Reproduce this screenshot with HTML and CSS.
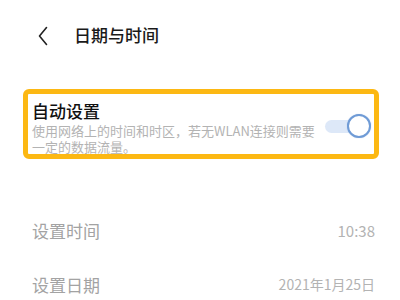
FILE: index.html
```html
<!DOCTYPE html>
<html lang="zh-CN">
<head>
<meta charset="utf-8">
<link rel="stylesheet" href="styles.css">
</head>
<body>
<div class="page">
  <header class="topbar">
    <svg class="back" width="10" height="20" viewBox="0 0 10 20"><path d="M8.5 1.5 L1.5 10 L8.5 18.5" fill="none" stroke="#222" stroke-width="1.6" stroke-linecap="round" stroke-linejoin="round"/></svg>
    <h1 class="title">日期与时间</h1>
  </header>
  <section class="auto">
    <div class="auto-text">
      <div class="auto-label">自动设置</div>
      <div class="auto-desc">使用网络上的时间和时区，若无WLAN连接则需要一定的数据流量。</div>
    </div>
    <div class="toggle"><span class="track"></span><span class="knob"></span></div>
  </section>
  <div class="row row-time">
    <span class="label">设置时间</span>
    <span class="value">10:38</span>
  </div>
  <div class="row row-date">
    <span class="label">设置日期</span>
    <span class="value value-date">2021年1月25日</span>
  </div>
</div>
</body>
</html>
```
FILE: styles.css
```css
html, body {
  margin: 0;
  padding: 0;
  background: #fff;
}
body {
  font-family: "Noto Sans CJK SC", "Noto Sans", sans-serif;
  width: 400px;
  height: 300px;
  overflow: hidden;
}
.topbar {
  display: flex;
  align-items: center;
  height: 70px;
  padding-left: 38px;
  box-sizing: border-box;
}
.back {
  display: block;
  margin-top: 1px;
}
.title {
  margin: 0 0 0 26px;
  font-size: 17px;
  font-weight: 500;
  line-height: 22px;
  color: #1a1a1a;
}
.auto {
  margin: 19px 21px 0 23px;
  border: 5px solid #fcb813;
  border-radius: 6px;
  padding: 9px 3px 3px 4px;
  display: flex;
  align-items: center;
  height: 70px;
  box-sizing: border-box;
}
.auto-text {
  flex: 1;
  min-width: 0;
}
.auto-label {
  font-size: 17px;
  line-height: 22px;
  font-weight: 500;
  color: #111;
}
.auto-desc {
  font-size: 13px;
  line-height: 16px;
  color: #b3b3b3;
  width: 292px;
  margin-top: 1px;
}
.toggle {
  position: relative;
  width: 46px;
  height: 25px;
  flex: none;
  margin-top: -2px;
}
.track {
  position: absolute;
  left: 0;
  top: 6px;
  width: 38px;
  height: 13px;
  border-radius: 7px;
  background: #dde8f8;
}
.knob {
  position: absolute;
  right: 0;
  top: 0;
  width: 20px;
  height: 20px;
  border-radius: 50%;
  border: 2.5px solid #6f9bd6;
  background: #fff;
  box-shadow: 0 0 1px rgba(111,155,214,0.6);
}
.row {
  display: flex;
  justify-content: space-between;
  align-items: center;
  padding: 0 25px 0 32px;
  height: 24px;
}
.row-time {
  margin-top: 59px;
}
.row-date {
  margin-top: 30px;
}
.label {
  font-size: 17px;
  color: #a3a3a3;
}
.value {
  font-size: 15px;
  color: #b3b3b3;
}
.value-date {
  font-size: 14px;
}
```
